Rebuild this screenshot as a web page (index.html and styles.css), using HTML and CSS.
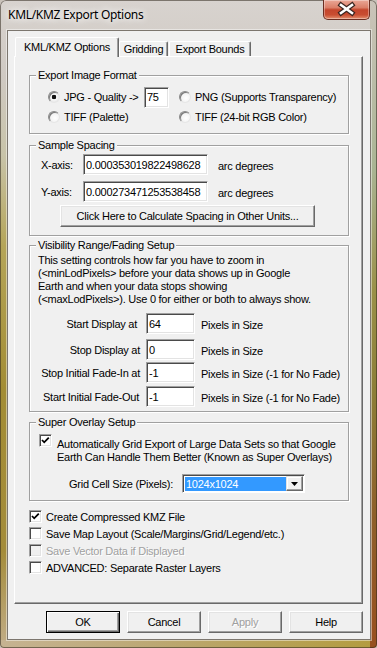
FILE: index.html
```html
<!DOCTYPE html>
<html lang="en">
<head>
    <meta charset="UTF-8">
    <meta name="viewport" content="width=device-width, initial-scale=1.0">
    <title>KML/KMZ Export Options</title>
    <link rel="stylesheet" href="styles.css">
</head>
<body>
    <div class="window">
        <div class="titlebar">
            <span class="title">KML/KMZ Export Options</span>
            <div class="close-btn">
                <svg width="45" height="19" viewBox="0 0 45 19">
                    <path d="M17 5 L28 13 M28 5 L17 13" stroke="#3b2520" stroke-width="5" stroke-linecap="square" fill="none"/>
                    <path d="M17 5 L28 13 M28 5 L17 13" stroke="#fff" stroke-width="2.6" stroke-linecap="square" fill="none"/>
                </svg>
            </div>
        </div>
        <div class="client">
            <div class="tabs">
                <div class="tab active">KML/KMZ Options</div>
                <div class="tab grid-tab">Gridding</div>
                <div class="tab bounds-tab">Export Bounds</div>
            </div>
            <div class="panel">
                <div class="group g-format">
                    <div class="group-title">Export Image Format</div>
                    <div class="format-grid">
                        <div class="opt"><span class="radio checked"></span><span class="opt-label jpg">JPG - Quality -&gt;</span><input class="field quality" value="75"></div>
                        <div class="opt"><span class="radio"></span><span class="opt-label">PNG (Supports Transparency)</span></div>
                        <div class="opt"><span class="radio"></span><span class="opt-label">TIFF (Palette)</span></div>
                        <div class="opt"><span class="radio"></span><span class="opt-label">TIFF (24-bit RGB Color)</span></div>
                    </div>
                </div>

                <div class="group g-spacing">
                    <div class="group-title">Sample Spacing</div>
                    <div class="axis-row first">
                        <span class="axis-label">X-axis:</span>
                        <input class="field axis" value="0.000353019822498628">
                        <span class="unit">arc degrees</span>
                    </div>
                    <div class="axis-row">
                        <span class="axis-label">Y-axis:</span>
                        <input class="field axis" value="0.000273471253538458">
                        <span class="unit">arc degrees</span>
                    </div>
                    <button class="btn calc">Click Here to Calculate Spacing in Other Units...</button>
                </div>

                <div class="group g-visibility">
                    <div class="group-title">Visibility Range/Fading Setup</div>
                    <p class="vis-text">This setting controls how far you have to zoom in<br>(&lt;minLodPixels&gt; before your data shows up in Google<br>Earth and when your data stops showing<br>(&lt;maxLodPixels&gt;). Use 0 for either or both to always show.</p>
                    <div class="vis-row r1"><span class="vis-label">Start Display at</span><input class="field pixels" value="64"><span class="unit">Pixels in Size</span></div>
                    <div class="vis-row r2"><span class="vis-label">Stop Display at</span><input class="field pixels" value="0"><span class="unit">Pixels in Size</span></div>
                    <div class="vis-row r3"><span class="vis-label">Stop Initial Fade-In at</span><input class="field pixels" value="-1"><span class="unit">Pixels in Size (-1 for No Fade)</span></div>
                    <div class="vis-row r4"><span class="vis-label">Start Initial Fade-Out</span><input class="field pixels" value="-1"><span class="unit">Pixels in Size (-1 for No Fade)</span></div>
                </div>

                <div class="group g-overlay">
                    <div class="group-title">Super Overlay Setup</div>
                    <div class="overlay-check">
                        <span class="checkbox checked">
                            <svg width="11" height="11" viewBox="0 0 11 11"><path d="M2 5 L4.2 7.3 L8.8 2.6" stroke="#000" stroke-width="1.8" fill="none"/></svg>
                        </span>
                        <span class="overlay-text">Automatically Grid Export of Large Data Sets so that Google<br>Earth Can Handle Them Better (Known as Super Overlays)</span>
                    </div>
                    <div class="cell-row">
                        <span class="cell-label">Grid Cell Size (Pixels):</span>
                        <div class="combo">
                            <span class="combo-value">1024x1024</span>
                            <span class="combo-btn">
                                <svg width="7" height="4" viewBox="0 0 7 4"><polygon points="0,0 7,0 3.5,4" fill="#000"/></svg>
                            </span>
                        </div>
                    </div>
                </div>

                <div class="checks">
                    <div class="check-row">
                        <span class="checkbox checked">
                            <svg width="11" height="11" viewBox="0 0 11 11"><path d="M2 5 L4.2 7.3 L8.8 2.6" stroke="#000" stroke-width="1.8" fill="none"/></svg>
                        </span>
                        <span class="check-label">Create Compressed KMZ File</span>
                    </div>
                    <div class="check-row">
                        <span class="checkbox"></span>
                        <span class="check-label">Save Map Layout (Scale/Margins/Grid/Legend/etc.)</span>
                    </div>
                    <div class="check-row disabled">
                        <span class="checkbox"></span>
                        <span class="check-label">Save Vector Data if Displayed</span>
                    </div>
                    <div class="check-row">
                        <span class="checkbox"></span>
                        <span class="check-label">ADVANCED: Separate Raster Layers</span>
                    </div>
                </div>
            </div>
            <div class="dialog-buttons">
                <button class="btn default">OK</button>
                <button class="btn">Cancel</button>
                <button class="btn" disabled>Apply</button>
                <button class="btn">Help</button>
            </div>
        </div>
    </div>
</body>
</html>
```

FILE: styles.css
```css
body { margin: 0; background: #c9c2ba; font-family: "Liberation Sans", Arial, sans-serif; font-size: 11px; letter-spacing: -0.25px; color: #000; }

/* window frame */
.window { width: 377px; height: 648px; border-radius: 6px 6px 4px 4px; overflow: hidden; box-shadow: inset 0 0 0 1px rgba(50, 40, 30, 0.55);
    background:
        linear-gradient(to bottom, #cbc4ba 0%, #a9b493 26%, #9a9048 45%, #8c7f38 60%, #8e5f2a 80%, #98501f 100%) right top / 7px 100% no-repeat,
        linear-gradient(to right, #c6b392 0%, #bca874 40%, #b39c3e 100%) left bottom / 100% 8px no-repeat,
        linear-gradient(to bottom, #d8d3cf 0%, #cfc9c2 12%, #c8c3a8 24%, #b5a558 38%, #a38d35 60%, #a48c3a 85%, #c2ad88 100%); }
.titlebar { height: 30px; display: flex; justify-content: space-between; }
.title { padding-left: 8px; line-height: 30px; font-family: "Noto Sans", sans-serif; font-size: 12px; letter-spacing: -0.3px; text-shadow: 0 0 6px #fff, 0 0 10px #fff; }
.close-btn { width: 47px; height: 20px; margin-right: 7px; box-sizing: border-box; border: 1px solid #6b2e22; border-top: none; border-radius: 0 0 5px 5px;
    background: linear-gradient(to bottom, #eaa797 0%, #db7f69 40%, #c4452c 52%, #c94d31 78%, #e3906f 100%);
    box-shadow: inset 0 0 0 1px rgba(255, 255, 255, 0.35); }
.close-btn svg { display: block; }

/* client area */
.client { width: 364px; height: 610px; margin-left: 7px; box-sizing: border-box; padding: 6px 7px 0 6px; background: #f0f0f0;
    border: 1px solid #7c766e; box-shadow: 0 0 0 1px rgba(255, 255, 255, 0.45); }

/* tabs */
.tabs { display: flex; align-items: flex-end; height: 19px; }
.tab { box-sizing: border-box; height: 15px; line-height: 14px; text-align: center; background: #f0f0f0;
    border: 1px solid; border-color: #fff #696969 transparent #fff; border-bottom: none; border-radius: 2px 2px 0 0; box-shadow: inset -1px 0 #a0a0a0; }
.tab.active { width: 104px; height: 20px; line-height: 19px; margin-left: 1px; margin-bottom: -1px; position: relative; z-index: 1; }
.grid-tab { width: 49px; }
.bounds-tab { width: 82px; margin-left: 1px; }
.panel { width: 349px; height: 548px; box-sizing: border-box; border: 1px solid; border-color: #fff #696969 #696969 #fff; box-shadow: inset -1px -1px #a0a0a0; }

/* group boxes */
.group { width: 320px; margin-left: 14px; box-sizing: border-box; border: 1px solid #a0a0a0; box-shadow: inset 1px 1px #fff, 1px 1px #fff; }
.group-title { width: fit-content; margin: -7px 0 0 6px; padding: 0 2px; line-height: 13px; background: #f0f0f0; }
.g-format { height: 59px; margin-top: 18px; }
.g-spacing { height: 91px; margin-top: 11px; }
.g-visibility { height: 167px; margin-top: 9px; }
.g-overlay { height: 79px; margin-top: 10px; }

/* format radios */
.format-grid { display: grid; grid-template-columns: 131px 1fr; grid-template-rows: 22px 18px; margin-top: 4px; padding-left: 18px; }
.opt { display: flex; align-items: center; white-space: nowrap; }
.radio { width: 12px; height: 12px; box-sizing: border-box; border-radius: 50%; border: 1px solid; border-color: #8a8a8a #e6e6e6 #e6e6e6 #8a8a8a;
    background: radial-gradient(circle at 60% 60%, #fff 0, #f4f4f4 50%, #dcdcdc 100%); box-shadow: inset 1px 1px #7a7a7a; flex-shrink: 0; }
.radio.checked { background: radial-gradient(circle at 50% 50%, #111 0, #111 2px, #fff 2.6px, #f2f2f2 50%, #dcdcdc 100%); }
.opt-label { margin-left: 4px; }
.opt-label.jpg { width: 80px; }

/* text fields */
.field { box-sizing: border-box; height: 21px; padding: 0 2px; font: inherit; letter-spacing: inherit; color: #000; background: #fff; outline: none;
    border: 1px solid; border-color: #a0a0a0 #fff #fff #a0a0a0; box-shadow: inset 1px 1px #4a4a4a, inset -1px -1px #e3e3e3; }
.quality { width: 25px; }
.axis { width: 125px; }
.pixels { width: 49px; margin-left: 6px; }
.unit { margin-left: 10px; padding-top: 2px; white-space: nowrap; }

/* sample spacing */
.axis-row { display: flex; align-items: center; height: 21px; margin-top: 6px; padding-left: 11px; }
.axis-row.first { margin-top: 2px; }
.axis-label { width: 42px; }

/* buttons */
.btn { display: block; box-sizing: border-box; height: 22px; padding: 0; font: inherit; letter-spacing: inherit; color: #000; background: #f0f0f0;
    border: 1px solid; border-color: #fff #696969 #696969 #fff; box-shadow: inset -1px -1px #a0a0a0, inset 1px 1px #e3e3e3; }
.btn.calc { width: 255px; margin: 3px 0 0 30px; }
.btn.default { border-color: #000; box-shadow: inset 1px 1px #fff, inset -1px -1px #696969, inset -2px -2px #a0a0a0; }
.btn:disabled { color: #a0a0a0; text-shadow: 1px 1px #fff; }

/* visibility */
.vis-text { margin: 2px 0 0 8px; line-height: 13px; white-space: nowrap; }
.vis-row { display: flex; align-items: center; height: 21px; }
.vis-row .unit { margin-left: 6px; }
.vis-label { width: 110px; text-align: right; white-space: nowrap; }
.r1 { margin-top: 7px; }
.r1 .vis-label { padding-right: 3px; box-sizing: border-box; }
.r2 { margin-top: 5px; }
.r3 { margin-top: 2px; }
.r4 { margin-top: 3px; }
.r4 .vis-label { padding-right: 1px; box-sizing: border-box; }

/* checkboxes */
.checkbox { display: block; width: 13px; height: 13px; box-sizing: border-box; flex-shrink: 0; background: #fff;
    border: 1px solid; border-color: #a0a0a0 #fff #fff #a0a0a0; box-shadow: inset 1px 1px #4a4a4a, inset -1px -1px #e3e3e3; }
.checkbox svg { display: block; }
.overlay-check { display: flex; align-items: flex-start; margin-top: 5px; padding-left: 9px; }
.overlay-text { margin: 4px 0 0 5px; line-height: 13px; white-space: nowrap; }
.cell-row { display: flex; align-items: center; height: 19px; margin-top: 10px; }
.cell-label { width: 113px; margin-left: 39px; white-space: nowrap; }
.combo { display: flex; width: 123px; height: 19px; box-sizing: border-box; padding: 1px; background: #fff;
    border: 1px solid; border-color: #a0a0a0 #fff #fff #a0a0a0; box-shadow: inset 1px 1px #4a4a4a; }
.combo-value { flex: 1; margin: 1px 0 0 1px; padding-left: 1px; line-height: 15px; background: #3399ff; color: #fff; }
.combo-btn { width: 17px; display: flex; align-items: center; justify-content: center; box-sizing: border-box; background: #f0f0f0;
    border: 1px solid; border-color: #e3e3e3 #696969 #696969 #e3e3e3; box-shadow: inset -1px -1px #a0a0a0, inset 1px 1px #fff; }
.combo-btn svg { display: block; }

.checks { margin-top: 7px; }
.check-row { display: flex; align-items: center; height: 17px; margin-left: 14px; }
.check-label { margin-left: 4px; white-space: nowrap; }
.check-row.disabled .checkbox { background: #f0f0f0; }
.check-row.disabled .check-label { color: #a0a0a0; text-shadow: 1px 1px #fff; }

/* dialog buttons */
.dialog-buttons { display: flex; justify-content: flex-end; gap: 7px; margin-top: 7px; }
.dialog-buttons .btn { width: 74px; }
```
